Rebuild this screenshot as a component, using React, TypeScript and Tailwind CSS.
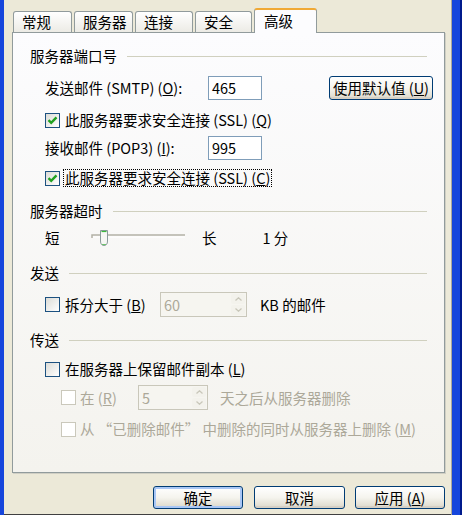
import { ReactNode } from "react"

const font = { fontFamily: '"Noto Sans CJK SC", "Liberation Sans", sans-serif' }

function Check({ checked, disabled }: { checked?: boolean; disabled?: boolean }) {
  return (
    <span
      className={`flex h-[15px] w-[15px] shrink-0 items-center justify-center border ${
        disabled ? "border-[#cac8bb] bg-white" : "border-[#1c5180] bg-linear-to-br from-[#dcdcd7] to-white"
      }`}
    >
      {checked && (
        <svg width="11" height="11" viewBox="0 0 11 11">
          <path d="M1.5 5.2 L4.2 7.8 L9.5 2.3" fill="none" stroke="#21a121" strokeWidth="2.4" />
        </svg>
      )}
    </span>
  )
}

function GroupTitle({ children, className = "" }: { children: ReactNode; className?: string }) {
  return (
    <div className={`flex h-[16px] items-center gap-[10px] ${className}`}>
      <span className="leading-[16px]">{children}</span>
      <div className="h-px flex-1 bg-[#d0d0bf]" />
    </div>
  )
}

function Spinner() {
  return (
    <div className="flex h-full w-[16px] flex-col gap-px p-px">
      <div className="flex flex-1 items-center justify-center rounded-[2px] bg-[#f3f2ec]">
        <svg width="7" height="4" viewBox="0 0 7 4">
          <path d="M0.5 3.5 L3.5 0.8 L6.5 3.5" fill="none" stroke="#c9c7ba" strokeWidth="1.3" />
        </svg>
      </div>
      <div className="flex flex-1 items-center justify-center rounded-[2px] bg-[#f3f2ec]">
        <svg width="7" height="4" viewBox="0 0 7 4">
          <path d="M0.5 0.5 L3.5 3.2 L6.5 0.5" fill="none" stroke="#c9c7ba" strokeWidth="1.3" />
        </svg>
      </div>
    </div>
  )
}

function XpButton({ children, className = "", isDefault }: { children: ReactNode; className?: string; isDefault?: boolean }) {
  return (
    <button
      className={`flex items-center justify-center rounded-[3px] border border-[#003c74] bg-linear-to-b from-white via-[#f5f4ee] to-[#dcd8ca] text-black ${
        isDefault ? "shadow-[inset_0_0_0_2px_#a9c7f5]" : "shadow-[inset_0_-2px_0_#d6d0c5]"
      } ${className}`}
    >
      {children}
    </button>
  )
}

export default function App() {
  const tabs = [
    { name: "常规", w: "w-[59px]" },
    { name: "服务器", w: "w-[59px]" },
    { name: "连接", w: "w-[58px]" },
    { name: "安全", w: "w-[57px]" },
  ]

  return (
    <div className="flex h-[515px] w-[462px] bg-[#ece9d8] text-[14.5px] text-black" style={font}>
      <div className="w-[4px] bg-[#1646dc]" />
      <div className="flex w-[447px] flex-col pt-[8px]">
        {/* tabs */}
        <div className="flex h-[24px] items-end gap-[2px] pl-[9px]">
          {tabs.map((t) => (
            <div
              key={t.name}
              className={`flex h-[21px] ${t.w} items-center rounded-t-[3px] border border-b-0 border-[#919b9c] bg-linear-to-b from-white to-[#ecebe5] pl-[8px] leading-[16px]`}
            >
              {t.name}
            </div>
          ))}
          <div className="relative z-10 -mb-px flex h-[25px] w-[63px] items-center rounded-t-[3px] border border-b-0 border-[#919b9c] border-t-2 border-t-[#f0a935] bg-[#fcfcfe] pb-[2px] pl-[9px] leading-[16px]">
            高级
          </div>
        </div>

        {/* panel */}
        <div className="ml-[8px] flex h-[441px] w-[433px] flex-col border border-[#919b9c] bg-linear-to-b from-[#fcfcfe] to-[#f4f3ee] pl-[17px] pr-[17px] pt-[15px] shadow-[1px_1px_0_#d0cfc4]">
          <GroupTitle>服务器端口号</GroupTitle>

          <div className="ml-[15px] mt-[12px] flex h-[24px] items-center">
            <span className="w-[163px] leading-[16px]">
              发送邮件 (SMTP) (<u>O</u>):
            </span>
            <div className="flex h-[24px] w-[54px] items-center border border-[#7f9db9] bg-white pl-[3px] leading-[16px]">465</div>
            <XpButton className="ml-auto mr-[-6px] h-[24px] w-[104px]">
              使用默认值 (<u>U</u>)
            </XpButton>
          </div>

          <div className="ml-[15px] mt-[12px] flex h-[16px] items-center gap-[5px]">
            <Check checked />
            <span className="leading-[16px]">
              此服务器要求安全连接 (SSL) (<u>Q</u>)
            </span>
          </div>

          <div className="ml-[15px] mt-[8px] flex h-[24px] items-center">
            <span className="w-[163px] leading-[16px]">
              接收邮件 (POP3) (<u>I</u>):
            </span>
            <div className="flex h-[24px] w-[54px] items-center border border-[#7f9db9] bg-white pl-[3px] leading-[16px]">995</div>
          </div>

          <div className="ml-[15px] mt-[10px] flex h-[16px] items-center gap-[3px]">
            <Check checked />
            <span className="border border-dotted border-black px-px leading-[16px]">
              此服务器要求安全连接 (SSL) (<u>C</u>)
            </span>
          </div>

          <GroupTitle className="mt-[17px]">服务器超时</GroupTitle>

          <div className="ml-[15px] mt-[11px] flex h-[16px] items-center">
            <span className="w-[45px] leading-[16px]">短</span>
            <svg width="95" height="18" viewBox="0 0 95 18">
              <path d="M2 9 V6 H95" fill="none" stroke="#b3b1a6" strokeWidth="1.5" />
              <path d="M3 8 H95" fill="none" stroke="#ffffff" strokeWidth="1" />
              <path d="M10.5 1.5 H17.5 V12 Q17.5 16.5 14 16.5 Q10.5 16.5 10.5 12 Z" fill="#f7f7f4" stroke="#8a9a9a" strokeWidth="1" />
              <path d="M11.5 2.5 H16.5" stroke="#3cbb3c" strokeWidth="1.2" />
              <path d="M12 15.5 H16" stroke="#6fc46f" strokeWidth="1" />
            </svg>
            <span className="ml-[17px] leading-[16px]">长</span>
            <span className="ml-[46px] leading-[16px]">1 分</span>
          </div>

          <GroupTitle className="mt-[19px]">发送</GroupTitle>

          <div className="ml-[15px] mt-[11px] flex h-[25px] items-center">
            <Check />
            <span className="ml-[5px] w-[95px] leading-[16px]">
              拆分大于 (<u>B</u>)
            </span>
            <div className="flex h-[25px] w-[87px] items-center border border-[#c9c7ba] bg-[#f6f5f0]">
              <span className="flex-1 pl-[3px] leading-[16px] text-[#aca899]">60</span>
              <Spinner />
            </div>
            <span className="ml-[13px] leading-[16px]">KB 的邮件</span>
          </div>

          <GroupTitle className="mt-[15px]">传送</GroupTitle>

          <div className="ml-[15px] mt-[13px] flex h-[16px] items-center gap-[5px]">
            <Check />
            <span className="leading-[16px]">
              在服务器上保留邮件副本 (<u>L</u>)
            </span>
          </div>

          <div className="ml-[31px] mt-[8px] flex h-[25px] items-center text-[#aca899]">
            <Check disabled />
            <span className="ml-[4px] w-[58px] leading-[16px]">
              在 (<u>R</u>)
            </span>
            <div className="flex h-[25px] w-[70px] items-center border border-[#c9c7ba] bg-[#f6f5f0]">
              <span className="flex-1 pl-[3px] leading-[16px]">5</span>
              <Spinner />
            </div>
            <span className="ml-[12px] leading-[16px]">天之后从服务器删除</span>
          </div>

          <div className="ml-[31px] mt-[11px] flex h-[16px] items-center gap-[4px] text-[#aca899]">
            <Check disabled />
            <span className="leading-[16px]">
              从 “已删除邮件” 中删除的同时从服务器上删除 (<u>M</u>)
            </span>
          </div>
        </div>

        {/* buttons */}
        <div className="mt-[13px] flex h-[23px] pl-[149px]">
          <XpButton isDefault className="h-[23px] w-[90px]">
            确定
          </XpButton>
          <XpButton className="ml-[11px] h-[23px] w-[91px]">取消</XpButton>
          <XpButton className="ml-[10px] h-[23px] w-[90px]">
            应用 (<u>A</u>)
          </XpButton>
        </div>
        <div className="mt-auto h-px bg-[#404040]" />
      </div>
      <div className="w-px bg-[#aca899]" />
      <div className="w-[8px] bg-[#1646dc]" />
      <div className="w-[2px] bg-[#001a8c]" />
    </div>
  )
}
